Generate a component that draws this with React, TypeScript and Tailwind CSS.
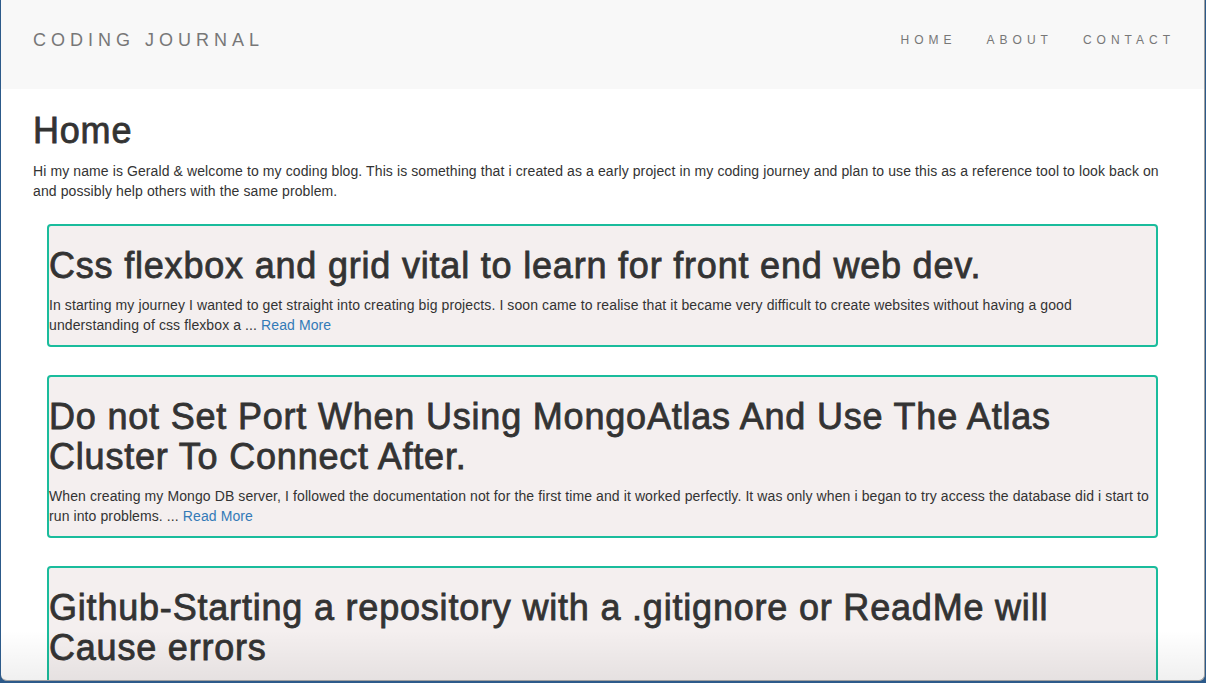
import React from "react";

const posts = [
  {
    title: "Css flexbox and grid vital to learn for front end web dev.",
    body: "In starting my journey I wanted to get straight into creating big projects. I soon came to realise that it became very difficult to create websites without having a good understanding of css flexbox a ...",
  },
  {
    title: "Do not Set Port When Using MongoAtlas And Use The Atlas Cluster To Connect After.",
    body: "When creating my Mongo DB server, I followed the documentation not for the first time and it worked perfectly. It was only when i began to try access the database did i start to run into problems. ...",
  },
  {
    title: "Github-Starting a repository with a .gitignore or ReadMe will Cause errors",
    body: "When creating a new repository on github, do not tick the boxes to add a readme or gitignore file. ...",
  },
];

export default function App() {
  return (
    <div
      className="w-[1206px] h-[683px] overflow-hidden bg-[#2c5a8a]"
      style={{ fontFamily: '"Liberation Sans", Arial, Helvetica, sans-serif' }}
    >
      <div className="relative ml-px w-[1204px] h-[681px] overflow-hidden rounded-b-[6px] border-r border-b border-[#a0a0a0] bg-white text-[#333] text-[14px] leading-[20px] tracking-[0.1px]">
        <nav className="flex h-[89px] items-center justify-between bg-[#f8f8f8] pb-[10px] pl-[32px] pr-[14px]">
          <span className="text-[18px] tracking-[5px] text-[#777]">CODING JOURNAL</span>
          <ul className="flex text-[12px] tracking-[5px] text-[#777]">
            <li className="px-[15px]">HOME</li>
            <li className="px-[15px]">ABOUT</li>
            <li className="px-[15px]">CONTACT</li>
          </ul>
        </nav>
        <main className="px-[32px] pt-[22px]">
          <h1 className="mb-[10px] text-[36px] leading-[39.6px] tracking-[0.8px] [-webkit-text-stroke:0.8px_#333]">
            Home
          </h1>
          <p className="mb-[23px]">
            Hi my name is Gerald &amp; welcome to my coding blog. This is something that i created as a early project in my coding journey and plan to use this as a reference tool to look back on and possibly help others with the same problem.
          </p>
          <div className="flex flex-col gap-[28px] px-[14px]">
            {posts.map((p) => (
              <div
                key={p.title}
                className="rounded-[4px] border-2 border-[#1abc9c] bg-[#f4efef]"
              >
                <h1 className="mt-[20px] mb-[10px] text-[36px] leading-[39.6px] tracking-[0.8px] [-webkit-text-stroke:0.8px_#333]">
                  {p.title}
                </h1>
                <p className="mb-[10px]">
                  {p.body} <a className="text-[#337ab7]">Read More</a>
                </p>
              </div>
            ))}
          </div>
        </main>
        <div className="pointer-events-none absolute inset-x-0 bottom-0 h-[50px] bg-gradient-to-b from-transparent to-[rgba(0,0,0,0.06)]" />
      </div>
    </div>
  );
}
